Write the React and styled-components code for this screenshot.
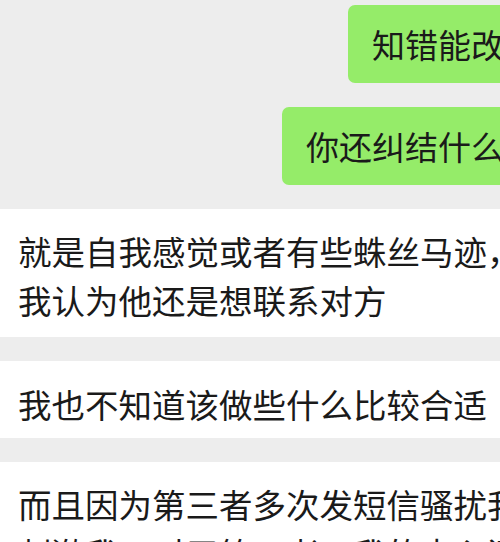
import React from "react";
import styled, { createGlobalStyle } from "styled-components";

const GlobalStyle = createGlobalStyle`
  html, body {
    margin: 0;
    padding: 0;
    background: #ededed;
  }
`;

const Screen = styled.div`
  width: 500px;
  height: 542px;
  overflow: hidden;
  background: #ededed;
  padding-top: 5px;
  box-sizing: border-box;
  display: flex;
  flex-direction: column;
  gap: 24px;
  font-family: "Noto Sans CJK SC", "Noto Sans", sans-serif;
  color: #1a1a1a;
`;

const OutRow = styled.div`
  flex-shrink: 0;
  display: flex;
  justify-content: flex-end;
  margin-right: -28px;
`;

const Bubble = styled.div`
  background: #95ec69;
  border-radius: 7px;
  height: 78px;
  padding: 0 24px;
  display: flex;
  align-items: center;
  font-size: 33px;
  line-height: 49px;
  white-space: nowrap;
`;

const Band = styled.div`
  flex-shrink: 0;
  background: #ffffff;
  padding: ${(p) => (p.$tall ? "17px 18px 13px" : "18px 18px 10px")};
  font-size: 33.5px;
  line-height: 49px;
  white-space: nowrap;
  overflow: hidden;
`;

const Line = styled.div``;

const messages = [
  ["就是自我感觉或者有些蛛丝马迹，", "我认为他还是想联系对方"],
  ["我也不知道该做些什么比较合适"],
  ["而且因为第三者多次发短信骚扰我", "刺激我，对于第三者，我的内心还是"],
];

export default function App() {
  return (
    <>
      <GlobalStyle />
      <Screen>
        <OutRow>
          <Bubble>知错能改</Bubble>
        </OutRow>
        <OutRow>
          <Bubble>你还纠结什么</Bubble>
        </OutRow>
        {messages.map((lines, i) => (
          <Band key={i} $tall={lines.length > 1}>
            {lines.map((l) => (
              <Line key={l}>{l}</Line>
            ))}
          </Band>
        ))}
      </Screen>
    </>
  );
}
